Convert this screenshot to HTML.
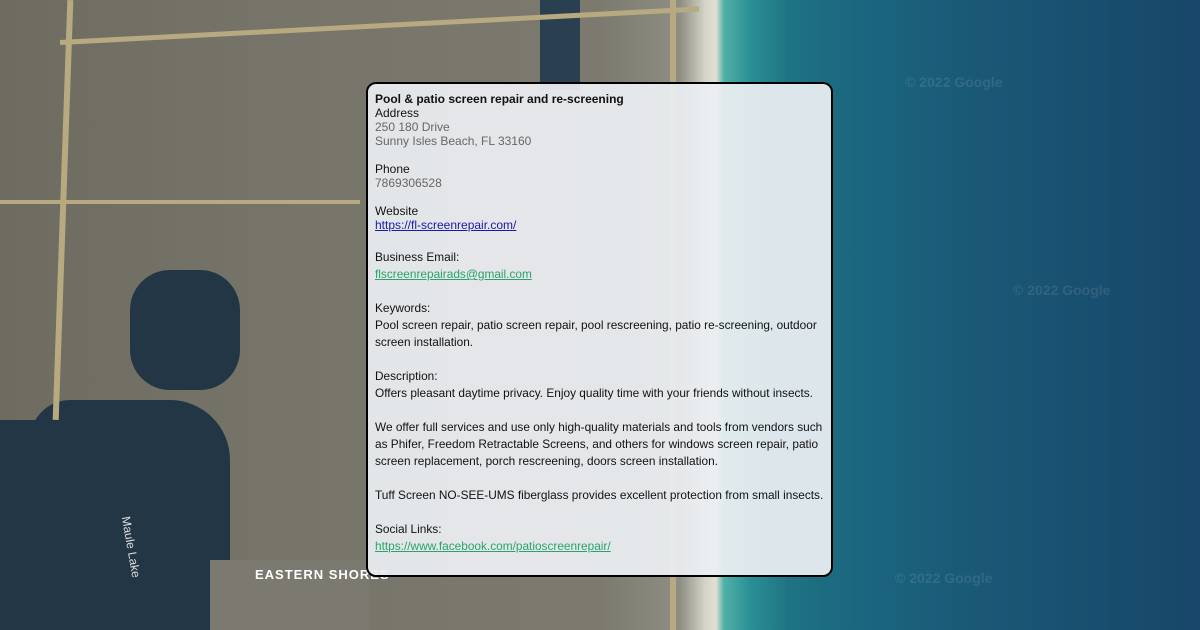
<!DOCTYPE html>
<html><head><meta charset="utf-8"><style>
body{margin:0;width:1200px;height:630px;overflow:hidden;position:relative;font-family:"Liberation Sans",sans-serif;
background:linear-gradient(90deg,#6e6c60 0px,#77756a 300px,#7c7a6e 600px,#8e8e84 680px,#d4d3c7 705px,#e2e0d4 716px,#4fb0a6 724px,#2b9096 750px,#1e7282 790px,#1b6680 860px,#1a5b78 950px,#195272 1050px,#174669 1200px);}
.b{position:absolute;background:#233646;}
.r{position:absolute;background:#b8aa80;}
.g{position:absolute;color:rgba(255,255,255,.1);font-weight:bold;font-size:14px}
#p{position:absolute;left:366px;top:82px;width:463px;height:491px;border:2px solid #000;border-radius:10px;background:rgba(236,239,242,.93);font-size:12px;color:#111;}
#p .in{position:absolute;left:7px;top:8px;}
.l{line-height:14px;font-size:12px}
.gr{color:#666}
.s{line-height:17px;font-size:11.85px;width:455px}
a{color:#1a1aa6}
a.gn{color:#2aa36a}
</style></head><body>
<div class="b" style="left:30px;top:400px;width:200px;height:230px;border-radius:40px 60px 0 0"></div>
<div class="b" style="left:130px;top:270px;width:110px;height:120px;border-radius:40px"></div>
<div class="b" style="left:0;top:420px;width:60px;height:210px"></div>
<div class="b" style="left:540px;top:0;width:40px;height:90px;background:#2a4050"></div>
<div class="r" style="left:60px;top:0;width:6px;height:420px;transform:rotate(2deg)"></div>
<div class="r" style="left:0;top:200px;width:360px;height:4px"></div>
<div class="r" style="left:60px;top:40px;width:640px;height:5px;transform:rotate(-3deg);transform-origin:left"></div>
<div class="r" style="left:670px;top:0;width:6px;height:630px"></div>
<div class="b" style="left:210px;top:560px;width:160px;height:70px;background:#7c7a70"></div>
<div style="position:absolute;left:255px;top:567px;color:#fff;font-weight:bold;font-size:13px;letter-spacing:1px">EASTERN SHORES</div>
<div style="position:absolute;left:100px;top:540px;color:#ddd;font-size:12px;transform:rotate(80deg)">Maule Lake</div>
<div class="g" style="left:905px;top:74px">© 2022 Google</div>
<div class="g" style="left:1013px;top:282px">© 2022 Google</div>
<div class="g" style="left:895px;top:570px">© 2022 Google</div>
<div id="p"><div class="in">
<div class="l"><b>Pool &amp; patio screen repair and re-screening</b></div>
<div class="l">Address</div>
<div class="l gr">250 180 Drive</div>
<div class="l gr">Sunny Isles Beach, FL 33160</div>
<div class="l">&nbsp;</div>
<div class="l">Phone</div>
<div class="l gr">7869306528</div>
<div class="l">&nbsp;</div>
<div class="l">Website</div>
<div class="l"><a href="#">https://fl-screenrepair.com/</a></div>
<div class="s" style="margin-top:8px">&nbsp;</div>
<div class="s" style="margin-top:-8px">Business Email:</div>
<div class="s"><a class="gn" href="#">flscreenrepairads@gmail.com</a></div>
<div class="s">&nbsp;</div>
<div class="s">Keywords:</div>
<div class="s">Pool screen repair, patio screen repair, pool rescreening, patio re-screening, outdoor screen installation.</div>
<div class="s">&nbsp;</div>
<div class="s">Description:</div>
<div class="s">Offers pleasant daytime privacy. Enjoy quality time with your friends without insects.</div>
<div class="s">&nbsp;</div>
<div class="s">We offer full services and use only high-quality materials and tools from vendors such as Phifer, Freedom Retractable Screens, and others for windows screen repair, patio screen replacement, porch rescreening, doors screen installation.</div>
<div class="s">&nbsp;</div>
<div class="s">Tuff Screen NO-SEE-UMS fiberglass provides excellent protection from small insects.</div>
<div class="s">&nbsp;</div>
<div class="s">Social Links:</div>
<div class="s"><a class="gn" href="#">https://www.facebook.com/patioscreenrepair/</a></div>
</div></div>
</body></html>
